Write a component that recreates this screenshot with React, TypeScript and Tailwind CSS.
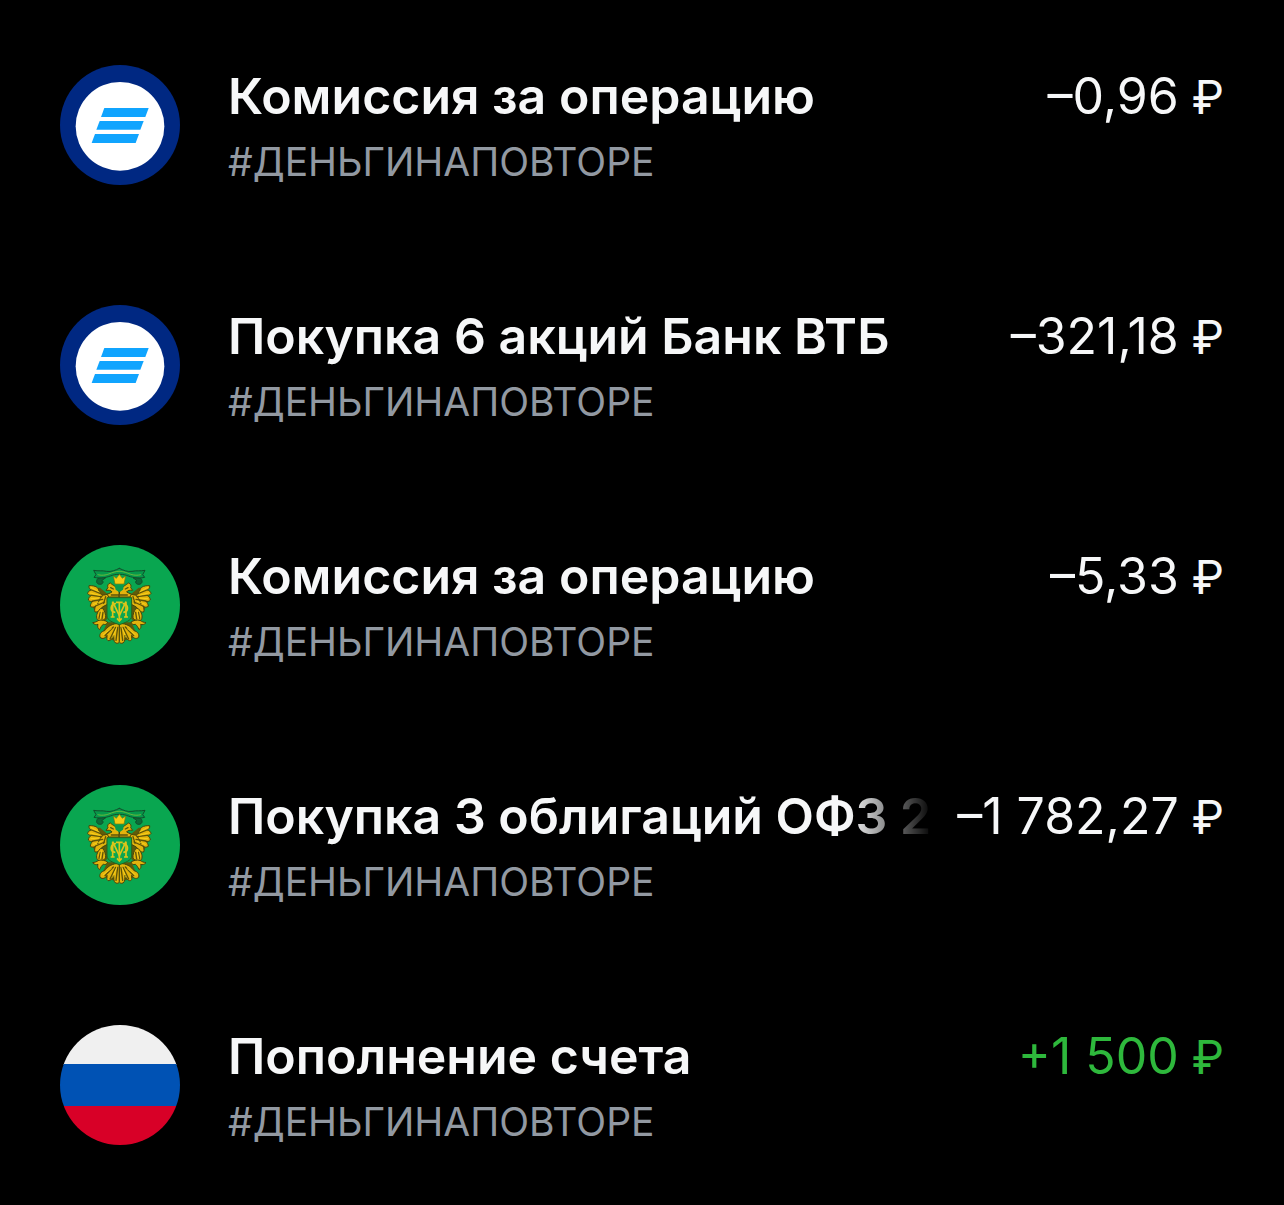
type Logo = "vtb" | "ofz" | "rub";

type Operation = {
  id: number;
  logo: Logo;
  title: string;
  tag: string;
  amount: string;
  income?: boolean;
  faded?: boolean;
};

const operations: Operation[] = [
  { id: 1, logo: "vtb", title: "Комиссия за операцию", tag: "#ДЕНЬГИНАПОВТОРЕ", amount: "–0,96" },
  { id: 2, logo: "vtb", title: "Покупка 6 акций Банк ВТБ", tag: "#ДЕНЬГИНАПОВТОРЕ", amount: "–321,18" },
  { id: 3, logo: "ofz", title: "Комиссия за операцию", tag: "#ДЕНЬГИНАПОВТОРЕ", amount: "–5,33" },
  { id: 4, logo: "ofz", title: "Покупка 3 облигаций ОФЗ 2", tag: "#ДЕНЬГИНАПОВТОРЕ", amount: "–1 782,27", faded: true },
  { id: 5, logo: "rub", title: "Пополнение счета", tag: "#ДЕНЬГИНАПОВТОРЕ", amount: "+1 500", income: true },
];

function VtbLogo() {
  return (
    <svg viewBox="30 30 360 360" className="size-full" aria-hidden="true">
      <circle cx="210" cy="210" r="180" fill="#002882" />
      <circle cx="210" cy="214" r="133" fill="#fff" />
      <g fill="#10a4fe">
        <path d="M163 159H296L286 186H153Z" />
        <path d="M149 198H281L271 224H139Z" />
        <path d="M135 237H267L257 264H125Z" />
      </g>
    </svg>
  );
}

// one side of the eagle, the other one is its mirror
function EagleHalf() {
  return (
    <g strokeLinejoin="round" strokeLinecap="round">
      <path d="M122 158L150 158L172 176L208 176V196H176V246L166 258L142 250L144 222L134 228L124 204Z" fill="#5f5b0a" />
      <path d="M172 262H208V318L178 314L154 300Z" fill="#5f5b0a" />
      <g fill="#e3b40c" stroke="#45460c" strokeWidth="3">
        <path d="M176 176C160 184 151 180 147 168C145 158 138 151 117 152C116 159 119 162 124 165C118 166 114 170 113 176C116 180 120 181 125 181C119 184 116 188 115 195C119 200 124 200 129 198C124 203 121 208 121 214C127 218 132 217 137 213C134 219 133 225 135 231C143 232 151 227 157 216L172 208V190H208V176Z" />
        <path d="M206 166C198 153 188 151 181 144C174 146 171 152 174 158L168 166C176 165 184 166 186 171L172 178L176 186H208Z" />
        <path d="M150 222C141 232 137 244 142 254C150 260 161 257 167 249C168 238 164 228 158 220Z" />
        <path d="M146 256C140 261 134 262 128 263C133 269 139 270 144 268C142 275 143 280 149 284C152 277 155 271 160 268C166 270 171 268 173 261C166 257 156 253 146 256Z" />
        <path d="M198 266C181 268 172 277 164 287C156 289 147 295 150 307C158 314 167 309 171 301C172 308 168 313 174 317C184 318 188 307 191 300C192 311 190 319 197 324C204 327 208 322 208 320V266Z" />
      </g>
      <g fill="none" stroke="#5d5308" strokeWidth="4">
        <path d="M125 165L152 176M125 181L154 185M129 198L158 193M137 213L164 201" />
        <path d="M149 193L143 206M158 181L150 190M167 185L161 205" />
        <path d="M151 232L147 250M159 232L156 252" />
        <path d="M190 276L165 302M197 277L180 312M203 277L198 316" />
        <path d="M182 158L190 162M184 180H208" />
      </g>
      <g fill="none" stroke="#ffdd22" strokeWidth="2">
        <path d="M123 157L148 171M121 174L149 181M123 191L149 189M130 208L154 199" />
        <path d="M184 281L160 299M200 278L188 307M154 228L151 249" />
      </g>
      <path
        d="M208 100C196 106 184 111 170 109C156 106 145 109 131 106L138 119L132 127C153 132 171 127 187 121C196 118 202 118 208 118"
        fill="#07994a"
        stroke="#124d2b"
        strokeWidth="3"
      />
      <path d="M144 119C159 123 172 119 184 114C192 111 200 109 208 109" fill="none" stroke="#6fbc3c" strokeWidth="3" strokeDasharray="3 2" />
      <path d="M143 131C137 138 139 147 149 148C159 149 163 138 155 137L166 129Z" fill="#0b6b38" stroke="#124d2b" strokeWidth="3" />
    </g>
  );
}

function OfzLogo() {
  return (
    <svg viewBox="30 30 360 360" className="size-full" aria-hidden="true">
      <circle cx="210" cy="210" r="180" fill="#09a650" />
      <EagleHalf />
      <g transform="matrix(-1 0 0 1 416 0)">
        <EagleHalf />
      </g>
      <path d="M190 123L199 130L208 118L217 130L227 123L222 147H195Z" fill="#f5cb12" stroke="#77750c" strokeWidth="2" />
      <path d="M194 151H222L219 164L208 172L197 164Z" fill="#0a994a" />
      <path d="M171 188H245V243C245 256 226 263 208 269C190 263 171 256 171 243Z" fill="#09a650" stroke="#28631e" strokeWidth="3" />
      <g fill="none" stroke="#dcc51a" strokeWidth="5">
        <path d="M208 202V258M198 202H218" />
        <path d="M188 246V200L208 242L228 200V246" />
        <path d="M198 206C180 204 178 232 196 232M218 206C236 204 238 232 220 232" />
        <path d="M182 246H194M222 246H234M201 250L208 258L215 250" />
      </g>
    </svg>
  );
}

function RubLogo() {
  return (
    <svg viewBox="0 0 120 120" className="size-full rounded-full" aria-hidden="true">
      <path fill="#f0f0f0" d="M0 0H120V40H0Z" />
      <path fill="#0052b4" d="M0 39H120V81H0Z" />
      <path fill="#d80027" d="M0 81H120V120H0Z" />
    </svg>
  );
}

const logos = {
  vtb: VtbLogo,
  ofz: OfzLogo,
  rub: RubLogo,
};

function OperationRow({ operation }: { operation: Operation }) {
  const LogoIcon = logos[operation.logo];

  return (
    <li className="flex gap-12 px-[60px]">
      <div className="size-[120px] shrink-0">
        <LogoIcon />
      </div>
      <div className="min-w-0 flex-1">
        <div className="flex gap-6 text-[50px] leading-[62px]">
          <h2
            className={
              operation.faded
                ? "min-w-0 flex-1 overflow-hidden font-semibold whitespace-nowrap [mask-image:linear-gradient(to_right,#000_calc(100%-84px),transparent)]"
                : "min-w-0 flex-1 font-semibold whitespace-nowrap"
            }
          >
            {operation.title}
          </h2>
          <p className={operation.income ? "shrink-0 whitespace-nowrap text-[#2eb83c]" : "shrink-0 whitespace-nowrap"}>
            {operation.amount}
            <span className="text-[46px]"> ₽</span>
          </p>
        </div>
        <p className="text-[39px] leading-[68px] text-[#9299a2]">{operation.tag}</p>
      </div>
    </li>
  );
}

export default function App() {
  return (
    <main className="min-h-screen bg-black pt-[65px] pb-[50px] font-['Inter',sans-serif] text-[#f6f7f8]">
      <ul className="grid auto-rows-[120px] gap-[120px]">
        {operations.map((operation) => (
          <OperationRow key={operation.id} operation={operation} />
        ))}
      </ul>
    </main>
  );
}
